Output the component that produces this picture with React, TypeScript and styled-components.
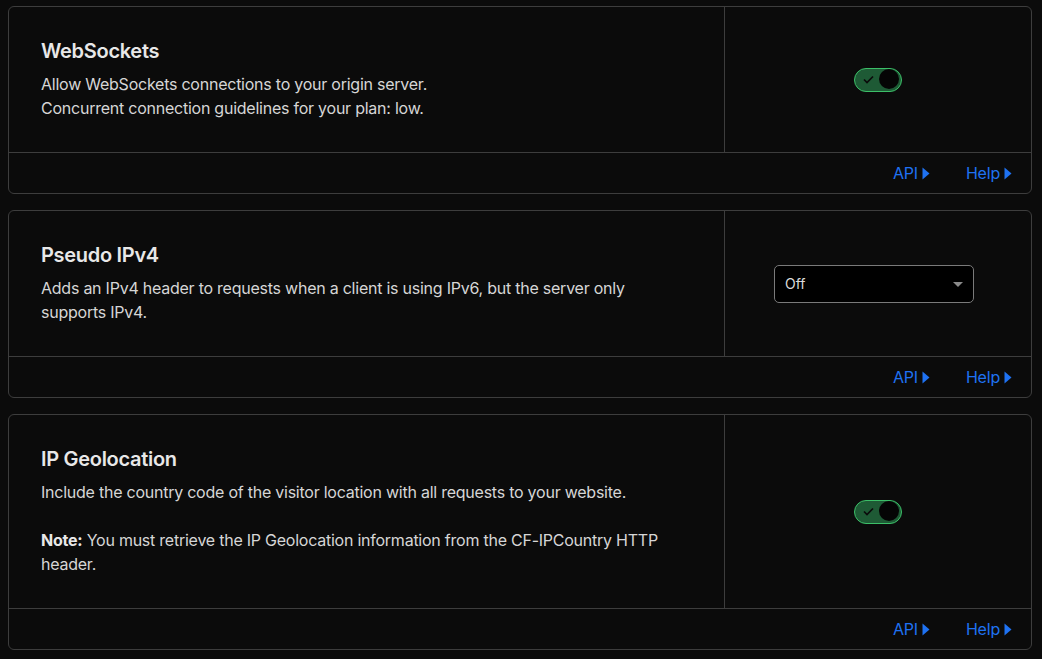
import React, { useState } from 'react';
import styled, { createGlobalStyle } from 'styled-components';

const GlobalStyle = createGlobalStyle`
    html, body {
        margin: 0;
        background: #0b0b0b;
        font-family: Inter, "Noto Sans", "Liberation Sans", sans-serif;
        -webkit-font-smoothing: antialiased;
    }
`;

const Page = styled.div`
    display: flex;
    flex-direction: column;
    gap: 16px;
    padding: 6px 10px 8px 8px;
`;
const Card = styled.section`
    border: 1px solid #3d3d3d;
    border-radius: 6px;
    background: #0b0b0b;
`;
const CardBody = styled.div`
    display: grid;
    grid-template-columns: 1fr 307px;
    border-bottom: 1px solid #3d3d3d;
`;
const Info = styled.div`
    padding: 32px;
`;
const Title = styled.h3`
    margin: 0 0 9px;
    font-size: 20px;
    line-height: 24px;
    font-weight: 600;
    letter-spacing: -0.3px;
    color: #e8e8e8;
`;
const Description = styled.p`
    margin: 0;
    font-size: 16px;
    line-height: 24px;
    letter-spacing: -0.24px;
    color: #d6d6d6;
    & + & {
        margin-top: 24px;
    }
    strong {
        font-weight: 700;
        color: #e8e8e8;
    }
`;
const Control = styled.div`
    display: flex;
    align-items: center;
    justify-content: center;
    border-left: 1px solid #3d3d3d;
`;
const Footer = styled.div`
    display: flex;
    justify-content: flex-end;
    align-items: center;
    gap: 36px;
    height: 40px;
    padding-right: 19px;
`;
const FooterLink = styled.a`
    display: inline-flex;
    align-items: center;
    gap: 4px;
    font-size: 16px;
    letter-spacing: -0.2px;
    color: #1f72f2;
    text-decoration: none;
    cursor: pointer;
`;

const Track = styled.button<{ $on: boolean }>`
    position: relative;
    width: 48px;
    height: 24px;
    padding: 0;
    border-radius: 12px;
    border: 1.5px solid ${(p) => (p.$on ? '#3cbf68' : '#666')};
    background: ${(p) => (p.$on ? '#1e5a35' : '#222')};
    cursor: pointer;
`;
const Knob = styled.span<{ $on: boolean }>`
    position: absolute;
    top: 0.5px;
    left: ${(p) => (p.$on ? '24px' : '1px')};
    width: 20px;
    height: 20px;
    border-radius: 50%;
    background: #050505;
`;
const Check = styled.svg`
    position: absolute;
    left: 8px;
    top: 6px;
`;

const SelectBox = styled.div`
    position: relative;
    width: 200px;
    height: 38px;
    box-sizing: border-box;
    margin-right: 8px;
    border: 1px solid #7a7a7a;
    border-radius: 5px;
    background: #000;
    display: flex;
    align-items: center;
    padding: 0 10px;
    font-size: 14px;
    color: #dcdcdc;
    cursor: pointer;
`;
const Caret = styled.span`
    position: absolute;
    right: 10px;
    top: 16px;
    width: 0;
    height: 0;
    border-left: 5px solid transparent;
    border-right: 5px solid transparent;
    border-top: 5px solid #8a8a8a;
`;

function Toggle({ initial }: { initial: boolean }) {
    const [on, setOn] = useState(initial);
    return (
        <Track $on={on} onClick={() => setOn((v) => !v)} aria-pressed={on}>
            {on && (
                <Check width="11" height="9" viewBox="0 0 11 9">
                    <path d="M1 4.5l3 3L10 1.5" fill="none" stroke="#0b0b0b" strokeWidth="1.7" />
                </Check>
            )}
            <Knob $on={on} />
        </Track>
    );
}

function Arrow() {
    return (
        <svg width="8" height="13" viewBox="0 0 8 13">
            <path d="M0.5 0.5L7.5 6.5L0.5 12.5Z" fill="#1f72f2" />
        </svg>
    );
}

function SettingCard({ title, children, control }: { title: string; children: React.ReactNode; control: React.ReactNode }) {
    return (
        <Card>
            <CardBody>
                <Info>
                    <Title>{title}</Title>
                    {children}
                </Info>
                <Control>{control}</Control>
            </CardBody>
            <Footer>
                <FooterLink>
                    API
                    <Arrow />
                </FooterLink>
                <FooterLink>
                    Help
                    <Arrow />
                </FooterLink>
            </Footer>
        </Card>
    );
}

export default function App() {
    return (
        <Page>
            <GlobalStyle />
            <SettingCard title="WebSockets" control={<Toggle initial />}>
                <Description>
                    Allow WebSockets connections to your origin server.
                    <br />
                    Concurrent connection guidelines for your plan: low.
                </Description>
            </SettingCard>
            <SettingCard
                title="Pseudo IPv4"
                control={
                    <SelectBox>
                        Off
                        <Caret />
                    </SelectBox>
                }
            >
                <Description>
                    Adds an IPv4 header to requests when a client is using IPv6, but the server only supports IPv4.
                </Description>
            </SettingCard>
            <SettingCard title="IP Geolocation" control={<Toggle initial />}>
                <Description>Include the country code of the visitor location with all requests to your website.</Description>
                <Description>
                    <strong>Note:</strong> You must retrieve the IP Geolocation information from the CF-IPCountry HTTP
                    header.
                </Description>
            </SettingCard>
        </Page>
    );
}
